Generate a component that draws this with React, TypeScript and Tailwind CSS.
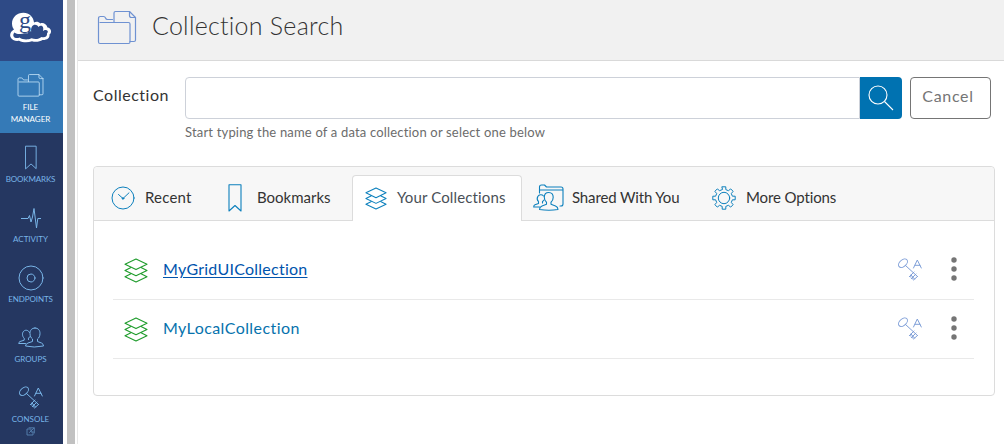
import React from "react";

type IconProps = { className?: string };

const svgBase = {
  fill: "none",
  stroke: "currentColor",
  strokeLinejoin: "round" as const,
  strokeLinecap: "round" as const,
};

function Folder({ className }: IconProps) {
  return (
    <svg viewBox="0 0 40 36" className={className} {...svgBase} strokeWidth="1.2">
      <path d="M3 13.500H31.500Q33 13.500 33 15V33Q33 34.500 31.500 34.500H3Q1.500 34.500 1.500 33V9.500Q1.500 7.500 3.500 7.500H6.500Q8 7.500 8.500 9Q9 10.500 10.500 10.500H15.500" />
      <path d="M17 13V4Q17 2.500 18.500 2.500H32.500L38.500 8.500V31Q38.500 32.500 37 32.500H33" />
      <path d="M32.500 2.500V6.500Q32.500 8.500 34.500 8.500H38.500" />
    </svg>
  );
}

function Bookmark({ className }: IconProps) {
  return (
    <svg viewBox="0 0 14 28" className={className} {...svgBase} strokeWidth="1.1">
      <path d="M1 .8H13V27L7 21.500L1 27Z" />
    </svg>
  );
}

function Pulse({ className }: IconProps) {
  return (
    <svg viewBox="0 0 20 22" className={className} {...svgBase} strokeWidth="1">
      <path d="M0 11.500H7L8.500 8.500L10 15L11.500 10L13 1.500L15.500 21L16.800 11.500H20" />
    </svg>
  );
}

function Endpoint({ className }: IconProps) {
  return (
    <svg viewBox="0 0 26 26" className={className} {...svgBase} strokeWidth="1">
      <circle cx="13" cy="13" r="12" />
      <circle cx="13" cy="13" r="4" />
    </svg>
  );
}

function People({ className }: IconProps) {
  return (
    <svg viewBox="0 0 26 21" className={className} {...svgBase} strokeWidth="1">
      <path d="M17 1C13.500 1 12 3.500 12 6.500C12 9 13 11 14.500 12V14.500L10 16Q7.500 17 7.500 19Q16 21 25.500 19Q25.500 17 23.500 16L19.500 14.500V12C21 11 22 9 22 6.500C22 3.500 20.500 1 17 1Z" />
      <path d="M11.500 5.500C10.500 3 7.500 2.500 5.700 4.200C3.800 6 4.200 9.500 6.200 11.200V13.200L2 14.500Q.7 15.200 .7 16.500H7.500M10.500 12.500V11.200L12 9.500" />
    </svg>
  );
}

function KeyA({ className }: IconProps) {
  return (
    <svg viewBox="0 0 24 23" className={className} {...svgBase} strokeWidth="1">
      <ellipse cx="5" cy="5.200" rx="5.200" ry="3.300" transform="rotate(-42 5 5.2)" />
      <path d="M7.500 7.500L19.500 18.500M11.500 18.500L16 14M13.500 20.500L18 16M15.500 22L19.500 18.500M11.500 18.500L13 19M13.500 20.500L15 21M13 17L16.500 21" />
      <path d="M15.500 10L19.300 2L23.300 10M17 7.300H22" />
    </svg>
  );
}

function Layers({ className }: IconProps) {
  return (
    <svg viewBox="0 0 24 25" className={className} {...svgBase} strokeWidth="1.100">
      <path d="M12 1L23 6.300L12 11.600L1 6.300ZM6.500 9.800L1 12.500L12 17.800L23 12.500L17.500 9.800M6.500 16L1 18.700L12 24L23 18.700L17.500 16" />
    </svg>
  );
}

function Clock({ className }: IconProps) {
  return (
    <svg viewBox="0 0 24 24" className={className} {...svgBase} strokeWidth="1">
      <circle cx="12" cy="12" r="11" />
      <path d="M7.500 8.500L12 12.500L18 6.800" />
      <circle cx="12" cy="12.500" r=".8" fill="currentColor" />
    </svg>
  );
}

function SharedFolder({ className }: IconProps) {
  return (
    <svg viewBox="0 0 31 27" className={className} {...svgBase} strokeWidth="1.100">
      <path d="M6.500 9V3Q6.500 1 8.500 1H11.500L13.500 3H28Q30 3 30 5V20Q30 22 28 22H27M7 6H30" />
      <path d="M15.700 8.500C12.500 8.500 11.300 10.800 11.300 13.300C11.300 15.500 12.200 17.300 13.500 18.300V20.300L9 22Q6.500 23 6.500 25.500Q16 27 25 25.500Q25 23 22.500 22L18 20.300V18.300C19.300 17.300 20.200 15.500 20.200 13.300C20.200 10.800 19 8.500 15.700 8.500Z" />
      <path d="M10.500 12C9 10.200 6 10.500 4.800 12.500C3.900 14.200 4.300 16.500 5.500 17.700V19.500L2 20.800Q.7 21.300 .7 23H6.500M9.500 19V17.700L11 16" />
    </svg>
  );
}

const GEAR =
  "M10.2 .8H13.8V3.600L16.400 4.700L18.700 2.900L21.100 5.300L19.300 7.600L20.400 10.200H23.200V13.800H20.400L19.300 16.400L21.100 18.700L18.700 21.100L16.400 19.300L13.800 20.400V23.200H10.200V20.400L7.600 19.300L5.300 21.100L2.900 18.700L4.700 16.400L3.600 13.800H.8V10.200H3.600L4.700 7.600L2.900 5.300L5.300 2.900L7.600 4.700L10.200 3.600Z";

function Gear({ className }: IconProps) {
  return (
    <svg viewBox="0 0 24 24" className={className} {...svgBase} strokeWidth="1">
      <path d={GEAR} />
      <circle cx="12" cy="12" r="5.700" />
    </svg>
  );
}

function External({ className }: IconProps) {
  return (
    <svg viewBox="0 0 9 9" className={className} {...svgBase} strokeWidth=".9">
      <path d="M5 2H1V8H7V5M3 .8H8.300V6M3.500 5.500L8 1M5 3V5H7" />
    </svg>
  );
}

function Logo() {
  return (
    <svg viewBox="0 0 42 32" className="h-8 w-[42px] overflow-visible">
      <path
        d="M4 17.500C1 19 -.5 22 .5 25C1.800 28.300 5.500 29.300 9 28.800C13 30.800 18 30.800 22 29.300C26 30.500 30 29.500 32.500 28C37 28.200 40 26 39.500 22.500C42.200 20.500 41.300 16 37.500 15.500C36.500 12 33 10.300 30.300 11.500C28.500 9.500 26 9.500 24 10.500C23.500 5 19 .8 13.500 .8C7 .8 2 5.500 2 11.500C2 14 2.800 16 4 17.500Z"
        fill="white"
      />
      <path
        d="M4.500 20.500C2.500 22.500 3 25.500 6 26C7.500 26.300 8.500 25.800 9.500 25.500C13 28 18 28 21.500 26.300C25.500 27.800 29 27 31.500 25C35 25.800 37.500 24.500 37 21.500C38.500 20 38 18.300 36 18C34.500 18 33.500 18.500 33 19C34 15.500 32.500 13.500 30.500 13.800C29.500 14 28.800 14.500 28.500 15C27 12 23.500 12 22 14.500C20.800 16.500 21 18.500 21.200 19.500C19.500 18.500 17.800 19.800 17.500 21.500C13 20.500 9 24 4.500 20.500Z"
        fill="#2e4a86"
      />
      <text x="9" y="15.500" fontFamily="Liberation Serif, serif" fontSize="24" fill="#2e4a86">
        g
      </text>
    </svg>
  );
}

const navItems = [
  { label: "BOOKMARKS", icon: <Bookmark className="h-[25px] w-3" />, spacing: "tracking-[-0.12px]" },
  { label: "ACTIVITY", icon: <Pulse className="h-[22px] w-5" />, spacing: "tracking-[0px]" },
  { label: "ENDPOINTS", icon: <Endpoint className="size-[26px]" />, spacing: "tracking-[-0.1px]" },
  { label: "GROUPS", icon: <People className="h-[21px] w-[26px]" />, spacing: "tracking-[0px]" },
  { label: "CONSOLE", icon: <KeyA className="h-[23px] w-6" />, spacing: "tracking-[0.05px]" },
];

function Sidebar() {
  return (
    <nav className="flex h-full w-[63px] shrink-0 flex-col bg-[#253761] text-[#79b5e8]">
      <div className="flex h-[61px] shrink-0 items-center justify-center bg-[#2e4a86] pb-[5px] pr-px">
        <Logo />
      </div>
      <div className="flex h-[72px] shrink-0 flex-col items-center bg-[#357ab7] pr-[2px] pt-[11px] text-white">
        <Folder className="h-[26px] w-[27px] text-[#c5e2f7]" />
        <div className="mt-[3px] text-center text-[8px] leading-3">
          FILE
          <br />
          MANAGER
        </div>
      </div>
      {navItems.map((item) => (
        <div key={item.label} className="flex h-[60px] shrink-0 flex-col items-center pr-[2px] pt-[11px]">
          <div className="flex h-[27px] shrink-0 items-center">{item.icon}</div>
          <div className={`mt-[2px] shrink-0 text-[8px] leading-3 ${item.spacing}`}>{item.label}</div>
          {item.label === "CONSOLE" && <External className="mt-[2px] size-[9px] shrink-0 opacity-60" />}
        </div>
      ))}
    </nav>
  );
}

function Tab({
  icon,
  label,
  className,
  labelClass = "",
}: {
  icon: React.ReactNode;
  label: string;
  className: string;
  labelClass?: string;
}) {
  return (
    <button className={`flex shrink-0 items-center whitespace-nowrap text-[15px] leading-5 ${className}`}>
      <span className="shrink-0 text-[#0d80bd]">{icon}</span>
      <span className={labelClass}>{label}</span>
    </button>
  );
}

function Row({ name, linkClass }: { name: string; linkClass: string }) {
  return (
    <li className="flex h-[59px] items-center border-b border-[#e9e9e9] pl-[11px] pr-[17px]">
      <Layers className="h-[25px] w-6 text-[#1f9c2c]" />
      <a className={`ml-[15px] text-base leading-6 ${linkClass}`}>{name}</a>
      <KeyA className="mb-[2px] ml-auto h-[23px] w-6 text-[#7f9fd8]" />
      <svg viewBox="0 0 6 24" className="mb-[2px] ml-[29px] h-6 w-[6px] fill-[#757575]">
        <circle cx="3" cy="3" r="2.700" />
        <circle cx="3" cy="12" r="2.700" />
        <circle cx="3" cy="21" r="2.700" />
      </svg>
    </li>
  );
}

export default function App() {
  return (
    <div className="flex h-[444px] w-[1004px] overflow-hidden bg-white font-['Lato',sans-serif] text-[#333] [font-variant-ligatures:none]">
      <Sidebar />
      <div className="ml-1 w-2 shrink-0 bg-[#c1c1c1]" />
      <main className="ml-[2px] flex min-w-0 grow flex-col border-l border-[#e8e8e8]">
        <header className="flex h-[61px] shrink-0 items-start border-b border-[#d9d9d9] bg-[#f1f1f1] pl-[19px] pt-[9px]">
          <Folder className="h-9 w-10 text-[#6f92d2]" />
          <h1 className="-mt-px ml-[15px] text-[25px] font-light leading-[34px] tracking-[0.25px]">Collection Search</h1>
        </header>

        <div className="flex h-[105px] shrink-0 pl-[15px] pt-4">
          <label className="w-[92px] pt-[6px] text-base leading-6 tracking-[0.52px]">Collection</label>
          <div>
            <div className="flex">
              <input className="h-[42px] w-[675px] rounded-l border border-[#cdd1d9] outline-none" />
              <button className="flex h-[42px] w-[42px] items-center justify-center rounded-r bg-[#0072b1]">
                <svg viewBox="0 0 26 26" className="size-[26px]" fill="none" stroke="white" strokeWidth="1.100">
                  <circle cx="10" cy="10" r="9" />
                  <path d="M16.500 16.500L25 25" />
                </svg>
              </button>
              <button className="ml-2 h-[42px] w-[81px] rounded border border-[#757575] pb-1 pr-[5px] text-base leading-6 tracking-[0.7px] text-[#757575]">
                Cancel
              </button>
            </div>
            <p className="mt-1 text-[13px] leading-[18px] tracking-[0.18px] text-[#6c6c6c]">
              Start typing the name of a data collection or select one below
            </p>
          </div>
        </div>

        <section className="ml-[15px] h-[230px] w-[902px] rounded border border-[#dcdcdc]">
          <div className="flex h-[54px] rounded-t border-b border-[#dcdcdc] bg-[#f7f7f7] pt-2">
            <Tab
              className="w-[134px] pl-[17px]"
              label="Recent"
              labelClass="pb-[2px] tracking-[0.2px]"
              icon={<Clock className="mr-[10px] size-6" />}
            />
            <Tab
              className="w-[124px]"
              label="Bookmarks"
              labelClass="pb-[2px] -ml-px"
              icon={<Bookmark className="mr-[16px] h-7 w-[14px]" />}
            />
            <Tab
              className="h-[46px] w-[170px] rounded-t border border-b-0 border-[#dcdcdc] bg-white pl-3 text-[#495057]"
              label="Your Collections"
              labelClass="pb-1 tracking-[0.13px]"
              icon={<Layers className="mr-[10px] h-[23px] w-[22px]" />}
            />
            <Tab
              className="w-[190px] pl-[11px]"
              label="Shared With You"
              labelClass="pb-[2px] tracking-[-0.15px]"
              icon={<SharedFolder className="mr-2 h-[27px] w-[31px]" />}
            />
            <Tab
              className=""
              label="More Options"
              labelClass="pb-[2px] tracking-[-0.12px]"
              icon={<Gear className="mr-[10px] size-6" />}
            />
          </div>
          <ul className="ml-[19px] mt-5 w-[861px]">
            <Row name="MyGridUICollection" linkClass="pb-[2px] tracking-[0.25px] text-[#0054ad] underline underline-offset-2" />
            <Row name="MyLocalCollection" linkClass="pb-[2px] tracking-[0.43px] text-[#0672ad]" />
          </ul>
        </section>
      </main>
    </div>
  );
}
